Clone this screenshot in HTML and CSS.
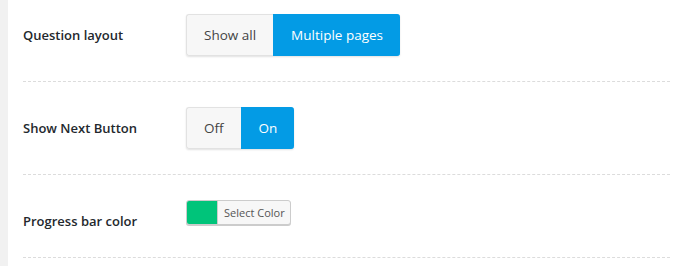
FILE: index.html
```html
<!DOCTYPE html>
<html lang="en">
<head>
  <meta charset="UTF-8">
  <meta name="viewport" content="width=device-width, initial-scale=1.0">
  <title>Quiz settings</title>
  <link rel="stylesheet" href="styles.css">
</head>
<body>
  <div class="panel">
    <div class="row row-first">
      <span class="label">Question layout</span>
      <div class="switch">
        <span class="seg">Show all</span>
        <span class="seg active">Multiple pages</span>
      </div>
    </div>
    <div class="row">
      <span class="label">Show Next Button</span>
      <div class="switch">
        <span class="seg">Off</span>
        <span class="seg active">On</span>
      </div>
    </div>
    <div class="row row-color">
      <span class="label">Progress bar color</span>
      <div class="color-pick">
        <span class="swatch"></span>
        <span class="color-text">Select Color</span>
      </div>
    </div>
  </div>
</body>
</html>
```

FILE: styles.css
```css
body {
  margin: 0;
  background: #f1f1f1;
  font-family: "Open Sans", "Noto Sans", sans-serif;
  color: #23282d;
}
.panel {
  margin-left: 8px;
  min-height: 266px;
  background: #fff;
  padding: 0 3px 0 15px;
}
.row {
  display: flex;
  align-items: center;
  padding: 25px 0 25px;
  border-bottom: 1px dashed #dcdcdc;
}
.row-first {
  padding-top: 14px;
}
.label {
  flex: 0 0 163px;
  font-size: 13px;
  font-weight: 600;
  line-height: 20px;
}
.switch {
  display: flex;
  height: 42px;
  border-radius: 3px;
  box-shadow: 0 1px 2px rgba(0, 0, 0, 0.12);
}
.seg {
  display: flex;
  align-items: center;
  padding: 0 17px;
  font-size: 13.5px;
  color: #444;
  background: #f7f7f7;
  border: 1px solid #e2e2e2;
  border-right: 0;
  border-radius: 3px 0 0 3px;
}
.seg.active {
  color: #fff;
  background: #039be5;
  border-color: #039be5;
  border-radius: 0 3px 3px 0;
}
.row-color {
  align-items: flex-start;
  padding-top: 25px;
  padding-bottom: 26px;
}
.row-color .label {
  margin-top: 11px;
}
.color-pick {
  display: flex;
  height: 23px;
  border: 1px solid #ccc;
  border-radius: 3px;
  background: #f7f7f7;
  box-shadow: 0 1px 0 #ccc;
  overflow: hidden;
}
.swatch {
  width: 30px;
  background: #00c47a;
  border-right: 1px solid #ccc;
}
.color-text {
  display: flex;
  align-items: center;
  padding: 0 5px 0 6px;
  font-size: 11px;
  color: #555;
}
```
